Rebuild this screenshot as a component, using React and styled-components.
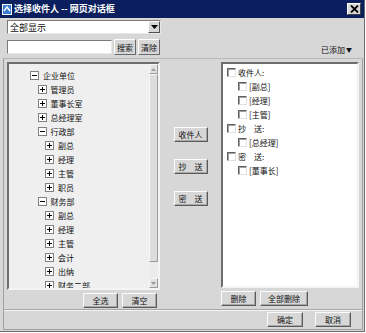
import React from 'react'
import styled, { createGlobalStyle } from 'styled-components'

const GlobalStyle = createGlobalStyle`
  body {
    margin: 0;
    background: #fff;
    font-family: "Noto Sans CJK SC", "Liberation Sans", sans-serif;
  }
`

const tree = [
  { label: '企业单位', level: 0, open: true },
  { label: '管理员', level: 1 },
  { label: '董事长室', level: 1 },
  { label: '总经理室', level: 1 },
  { label: '行政部', level: 1, open: true },
  { label: '副总', level: 2 },
  { label: '经理', level: 2 },
  { label: '主管', level: 2 },
  { label: '职员', level: 2 },
  { label: '财务部', level: 1, open: true },
  { label: '副总', level: 2 },
  { label: '经理', level: 2 },
  { label: '主管', level: 2 },
  { label: '会计', level: 2 },
  { label: '出纳', level: 2 },
  { label: '财务二部', level: 2 },
]

const added = [
  { label: '收件人:', level: 0 },
  { label: '[副总]', level: 1 },
  { label: '[经理]', level: 1 },
  { label: '[主管]', level: 1 },
  { label: '抄　送:', level: 0 },
  { label: '[总经理]', level: 1 },
  { label: '密　送:', level: 0 },
  { label: '[董事长]', level: 1 },
]

const App = () => {
  return (
    <>
      <GlobalStyle />
      <Window>
        <TitleBar>
          <TitleIcon viewBox="0 0 10 11">
            <rect x="0" y="0" width="10" height="11" fill="#fff" />
            <rect x="1" y="1" width="8" height="9" fill="#3a7bd5" />
            <path d="M2 7 L5 3 L8 7" stroke="#fff" strokeWidth="1.4" fill="none" />
          </TitleIcon>
          <TitleText>选择收件人 -- 网页对话框</TitleText>
          <CloseBtn>
            <svg width="9" height="8" viewBox="0 0 9 8">
              <path d="M1 0.5 L8 7.5 M8 0.5 L1 7.5" stroke="#000" strokeWidth="1.8" />
            </svg>
          </CloseBtn>
        </TitleBar>

        <Body>
          <Toolbar>
            <Select>
              <span>全部显示</span>
              <DropBtn>
                <svg width="7" height="4" viewBox="0 0 7 4">
                  <path d="M0 0 H7 L3.5 4 Z" fill="#000" />
                </svg>
              </DropBtn>
            </Select>
            <SearchRow>
              <SearchGroup>
                <SearchInput />
                <SmallBtn>搜索</SmallBtn>
                <SmallBtn>清除</SmallBtn>
              </SearchGroup>
              <AddedLabel>已添加<Arrow>▼</Arrow></AddedLabel>
            </SearchRow>
          </Toolbar>

          <Frame>
            <Main>
              <LeftCol>
                <ListBox>
                  <TreeList>
                    {tree.map((t, i) => (
                      <TreeRow key={i} $level={t.level}>
                        <Expander $open={t.open} />
                        <span>{t.label}</span>
                      </TreeRow>
                    ))}
                  </TreeList>
                  <Scrollbar>
                    <ArrowBtn>
                      <svg width="5" height="3" viewBox="0 0 5 3"><path d="M0 3 L2.5 0 L5 3 Z" fill="#9a9a9a" /></svg>
                    </ArrowBtn>
                    <Thumb />
                    <Track />
                    <ArrowBtn>
                      <svg width="5" height="3" viewBox="0 0 5 3"><path d="M0 0 L2.5 3 L5 0 Z" fill="#9a9a9a" /></svg>
                    </ArrowBtn>
                  </Scrollbar>
                </ListBox>
                <BtnRow $pad="0 3px 0 0">
                  <Btn $w={35}>全选</Btn>
                  <Btn $w={35}>清空</Btn>
                </BtnRow>
              </LeftCol>

              <MidCol>
                <Btn $w={34}>收件人</Btn>
                <Btn $w={34}>抄　送</Btn>
                <Btn $w={34}>密　送</Btn>
              </MidCol>

              <RightCol>
                <AddedBox>
                  {added.map((a, i) => (
                    <CheckRow key={i} $level={a.level}>
                      <Check />
                      <span>{a.label}</span>
                    </CheckRow>
                  ))}
                </AddedBox>
                <BtnRow $justify="flex-start" $pad="0 0 0 0">
                  <Btn $w={35}>删除</Btn>
                  <Btn $w={48}>全部删除</Btn>
                </BtnRow>
              </RightCol>
            </Main>

            <Footer>
              <Btn $w={36}>确定</Btn>
              <Btn $w={36}>取消</Btn>
            </Footer>
          </Frame>
        </Body>
      </Window>
    </>
  )
}

export default App

const Window = styled.div`
  width: 364px;
  height: 331px;
  background: #d7d7d7;
  border-right: 1px solid #6a6a6a;
  border-bottom: 1px solid #6a6a6a;
  display: flex;
  flex-direction: column;
  font-size: 8px;
  color: #111;
`

const TitleBar = styled.div`
  height: 18px;
  background: #0b1f5e;
  display: flex;
  align-items: center;
  padding: 0 3px 0 2px;
`

const TitleIcon = styled.svg`
  width: 10px;
  height: 11px;
  margin-right: 2px;
`

const TitleText = styled.div`
  flex: 1;
  color: #fff;
  font-weight: bold;
  font-size: 9px;
  line-height: 18px;
`

const CloseBtn = styled.div`
  width: 14px;
  height: 12px;
  background: #d7d7d7;
  border: 1px solid;
  border-color: #fff #404040 #404040 #fff;
  box-sizing: border-box;
  display: flex;
  align-items: center;
  justify-content: center;
`

const Body = styled.div`
  flex: 1;
  display: flex;
  flex-direction: column;
  padding: 0 1px 1px 3px;
`

const Toolbar = styled.div`
  height: 40px;
  padding: 2px 0 0 4px;
  box-sizing: border-box;
  display: flex;
  flex-direction: column;
`

const Select = styled.div`
  width: 154px;
  height: 14px;
  box-sizing: border-box;
  background: #fff;
  border: 1px solid;
  border-color: #7a7a7a #e8e8e8 #e8e8e8 #7a7a7a;
  display: flex;
  align-items: center;
  justify-content: space-between;
  font-size: 9px;
  padding-left: 2px;
`

const DropBtn = styled.div`
  width: 12px;
  height: 12px;
  box-sizing: border-box;
  background: #d7d7d7;
  border: 1px solid;
  border-color: #fff #505050 #505050 #fff;
  display: flex;
  align-items: center;
  justify-content: center;
`

const SearchRow = styled.div`
  display: flex;
  justify-content: space-between;
  align-items: flex-end;
  margin-top: 5px;
  padding-right: 11px;
`

const SearchGroup = styled.div`
  display: flex;
  align-items: center;
  gap: 2px;
`

const SearchInput = styled.div`
  width: 105px;
  height: 14px;
  box-sizing: border-box;
  background: #fff;
  border: 1px solid;
  border-color: #7a7a7a #e8e8e8 #e8e8e8 #7a7a7a;
`

const SmallBtn = styled.div`
  width: 22px;
  height: 16px;
  box-sizing: border-box;
  background: #d7d7d7;
  border: 1px solid;
  border-color: #fff #6a6a6a #6a6a6a #fff;
  display: flex;
  align-items: center;
  justify-content: center;
  font-size: 8px;
`

const AddedLabel = styled.div`
  font-size: 8px;
  line-height: 10px;
  display: flex;
  align-items: center;
`

const Arrow = styled.span`
  font-size: 6px;
  margin-left: 1px;
`

const Frame = styled.div`
  flex: 1;
  border-top: 1px solid #b8b8b8;
  border-left: 1px solid #a0a0a0;
  border-right: 1px solid #a0a0a0;
  border-bottom: 1px solid #a0a0a0;
  display: flex;
  flex-direction: column;
`

const Main = styled.div`
  flex: 1;
  display: flex;
  padding: 3px 3px 0 3px;
`

const LeftCol = styled.div`
  width: 153px;
  display: flex;
  flex-direction: column;
`

const ListBox = styled.div`
  height: 228px;
  box-sizing: border-box;
  border: 2px solid;
  border-color: #6e6e6e #f4f4f4 #f4f4f4 #6e6e6e;
  background: #efefef;
  display: flex;
  overflow: hidden;
`

const TreeList = styled.div`
  flex: 1;
  padding-top: 4px;
`

const TreeRow = styled.div`
  height: 14px;
  display: flex;
  align-items: center;
  padding-left: ${p => 21 + p.$level * 7.5}px;
  gap: 4px;
  white-space: nowrap;
`

const Expander = styled.div`
  position: relative;
  width: 7px;
  height: 7px;
  border: 1px solid #808080;
  background: #fff;
  flex-shrink: 0;

  &::before {
    content: '';
    position: absolute;
    left: 1px;
    top: 3px;
    width: 5px;
    height: 1px;
    background: #000;
  }

  &::after {
    content: '';
    display: ${p => (p.$open ? 'none' : 'block')};
    position: absolute;
    left: 3px;
    top: 1px;
    width: 1px;
    height: 5px;
    background: #000;
  }
`

const Scrollbar = styled.div`
  width: 9px;
  display: flex;
  flex-direction: column;
  background: #e6e6e6;
`

const ArrowBtn = styled.div`
  height: 10px;
  box-sizing: border-box;
  background: #e2e2e2;
  border: 1px solid;
  border-color: #f8f8f8 #9a9a9a #9a9a9a #f8f8f8;
  display: flex;
  align-items: center;
  justify-content: center;
`

const Thumb = styled.div`
  height: 188px;
  box-sizing: border-box;
  background: #dcdcdc;
  border: 1px solid;
  border-color: #f8f8f8 #9a9a9a #9a9a9a #f8f8f8;
`

const Track = styled.div`
  flex: 1;
  background: #ececec;
`

const BtnRow = styled.div`
  display: flex;
  justify-content: ${p => p.$justify || 'flex-end'};
  gap: 4px;
  margin-top: 3px;
  padding: ${p => p.$pad};
`

const Btn = styled.div`
  width: ${p => p.$w}px;
  height: 15px;
  box-sizing: border-box;
  background: #d7d7d7;
  border: 1px solid;
  border-color: #fbfbfb #5a5a5a #5a5a5a #fbfbfb;
  box-shadow: inset -1px -1px 0 #a8a8a8;
  display: flex;
  align-items: center;
  justify-content: center;
  font-size: 8px;
  white-space: nowrap;
`

const MidCol = styled.div`
  width: 61px;
  display: flex;
  flex-direction: column;
  align-items: center;
  gap: 17px;
  padding-top: 65px;
`

const RightCol = styled.div`
  width: 138px;
  display: flex;
  flex-direction: column;
`

const AddedBox = styled.div`
  height: 226px;
  box-sizing: border-box;
  border: 2px solid;
  border-color: #6e6e6e #f4f4f4 #f4f4f4 #6e6e6e;
  background: #fff;
  padding: 1px 0 0 4px;
`

const CheckRow = styled.div`
  height: 14px;
  display: flex;
  align-items: center;
  gap: 2px;
  padding-left: ${p => p.$level * 11}px;
  white-space: nowrap;
`

const Check = styled.div`
  width: 9px;
  height: 9px;
  box-sizing: border-box;
  background: #fff;
  border: 1px solid;
  border-color: #606060 #e0e0e0 #e0e0e0 #606060;
  box-shadow: inset 1px 1px 0 #a0a0a0;
`

const Footer = styled.div`
  height: 19px;
  border-top: 1px solid #a8a8a8;
  box-shadow: inset 0 1px 0 #f4f4f4;
  display: flex;
  justify-content: flex-end;
  align-items: center;
  gap: 12px;
  padding-right: 11px;
`
